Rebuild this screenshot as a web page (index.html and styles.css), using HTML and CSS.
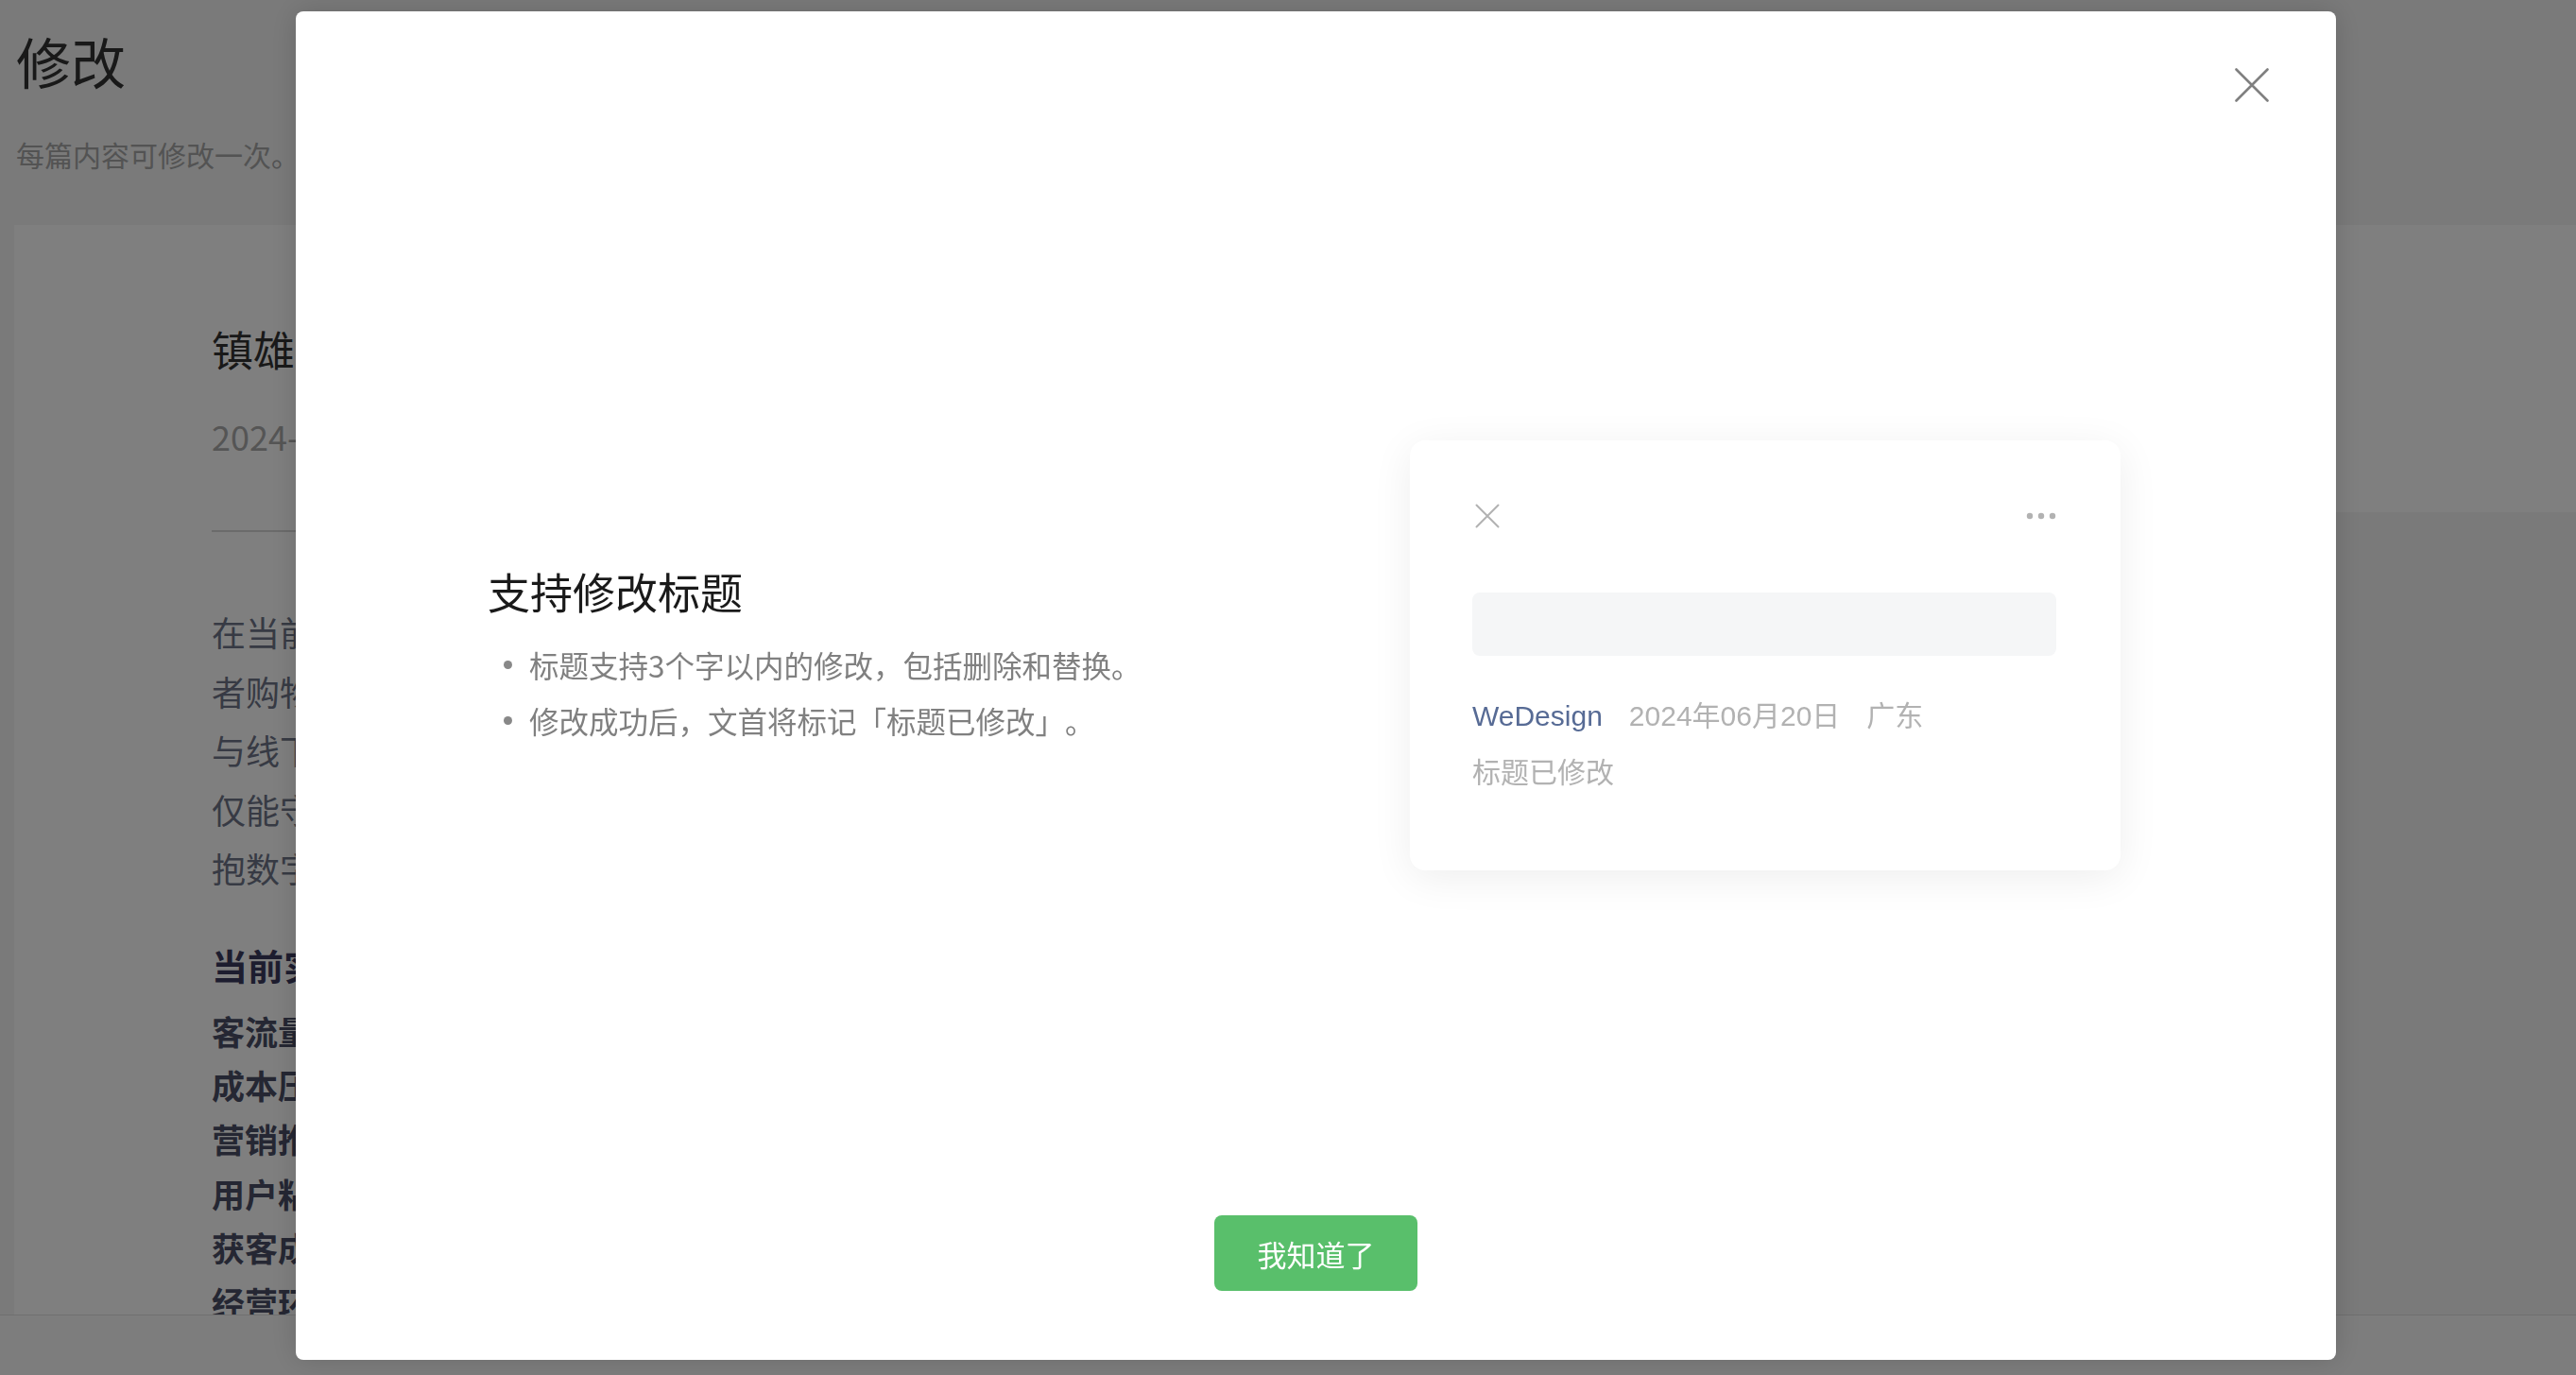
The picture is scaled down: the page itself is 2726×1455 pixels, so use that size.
FILE: index.html
```html
<!DOCTYPE html>
<html lang="zh-CN">
<head>
<meta charset="utf-8">
<title>修改</title>
<link rel="stylesheet" href="styles.css">
</head>
<body>
<div class="page">
  <header class="page-head">
    <h1 class="page-title">修改</h1>
    <p class="page-desc">每篇内容可修改一次。</p>
  </header>
  <main class="workspace">
    <article class="article-card">
      <h2 class="article-title">镇雄县商户数字化转型</h2>
      <div class="article-meta">2024-06-20 镇雄</div>
      <hr class="article-divider">
      <p class="article-text">在当前，消费<br>者购物方式多元，<br>与线下相融合，不<br>仅能守客，还需拥<br>抱数字化。</p>
      <h3 class="article-subtitle">当前实体商户面临的挑战</h3>
      <ul class="article-points">
        <li>客流量下降：线上分流明显</li>
        <li>成本压力大：租金持续上涨</li>
        <li>营销推广难：缺少有效渠道</li>
        <li>用户粘性低：复购率不高</li>
        <li>获客成本高：投放效果有限</li>
        <li>经营环境变化：竞争激烈</li>
      </ul>
    </article>
    <aside class="side-panel"></aside>
  </main>
  <footer class="bottom-bar"></footer>
</div>

<div class="overlay">
  <div class="dialog">
    <button class="dialog-close" type="button" aria-label="关闭">
      <svg width="36" height="36" viewBox="0 0 36 36"><path d="M1.5 1.5 L34.5 34.5 M34.5 1.5 L1.5 34.5" stroke="#808080" stroke-width="2.6" stroke-linecap="round" fill="none"/></svg>
    </button>
    <div class="dialog-body">
      <div class="intro">
        <h2 class="intro-title">支持修改标题</h2>
        <ul class="intro-list">
          <li>标题支持3个字以内的修改，包括删除和替换。</li>
          <li>修改成功后，文首将标记「标题已修改」。</li>
        </ul>
      </div>
      <div class="preview">
        <div class="preview-bar">
          <svg class="preview-x" width="26" height="26" viewBox="0 0 26 26"><path d="M1.5 1.5 L24.5 24.5 M24.5 1.5 L1.5 24.5" stroke="#b2b2b2" stroke-width="2" stroke-linecap="round" fill="none"/></svg>
          <svg width="32" height="8" viewBox="0 0 32 8"><circle cx="4" cy="4" r="3.2" fill="#b2b2b2"/><circle cx="16" cy="4" r="3.2" fill="#b2b2b2"/><circle cx="28" cy="4" r="3.2" fill="#b2b2b2"/></svg>
        </div>
        <div class="preview-title"></div>
        <div class="preview-meta"><span class="preview-author">WeDesign</span><span>2024年06月20日</span><span>广东</span></div>
        <div class="preview-tag">标题已修改</div>
      </div>
    </div>
    <div class="dialog-foot">
      <button class="btn-primary" type="button">我知道了</button>
    </div>
  </div>
</div>
</body>
</html>
```

FILE: styles.css
```css
* { box-sizing: border-box; }
html, body { margin: 0; height: 100%; }
body {
  font-family: "Noto Sans CJK SC", "Noto Sans", sans-serif;
  background: #f4f5f5;
  overflow: hidden;
  text-spacing-trim: space-all;
}

/* background page */
.page { height: 100vh; display: flex; flex-direction: column; }
.page-head { padding: 24px 16px 0 17px; }
.page-title { margin: 0; font-size: 58px; line-height: 80px; font-weight: 400; color: #333; }
.page-desc { margin: 37px 0 0; font-size: 30px; line-height: 44px; color: #a6a6a6; }

.workspace {
  flex: 1;
  min-height: 0;
  display: flex;
  gap: 16px;
  margin-top: 53px;
  padding-left: 15px;
  overflow: hidden;
}
.article-card {
  flex: 1;
  background: #fff;
  padding: 99px 209px 0;
  overflow: hidden;
}
.article-title { margin: 0; font-size: 44px; line-height: 64px; font-weight: 400; color: #333; white-space: nowrap; }
.article-meta { margin-top: 35px; font-size: 36px; line-height: 50px; color: #aaa; }
.article-divider { margin: 75px 0 0; border: 0; height: 2px; background: #d6d6d6; }
.article-text { margin: 74px 0 0; max-width: 290px; font-size: 36px; line-height: 62.5px; color: #6e7588; }
.article-subtitle { margin: 43px 0 0; font-size: 38px; line-height: 56px; font-weight: 700; color: #3b3a5e; }
.article-points {
  width: max-content;
  list-style: none;
  margin: 13px 0 0;
  padding: 0;
  font-size: 35px;
  line-height: 57.4px;
  font-weight: 700;
  color: #4a4e66;
}
.side-panel { flex: none; width: 600px; height: 304px; background: #fff; }
.bottom-bar { flex: none; height: 64px; background: #fafafa; border-top: 1px solid #e0e0e0; }

/* modal */
.overlay {
  position: fixed;
  inset: 0;
  background: rgba(0, 0, 0, 0.5);
  display: flex;
  padding: 12px 254px 16px 313px;
}
.dialog {
  flex: 1;
  position: relative;
  display: flex;
  flex-direction: column;
  background: #fff;
  border-radius: 8px;
  box-shadow: 0 0 30px rgba(0, 0, 0, 0.15);
}
.dialog-close {
  position: absolute;
  top: 60px;
  right: 71px;
  width: 36px;
  height: 36px;
  padding: 0;
  border: 0;
  background: none;
  cursor: pointer;
}
.dialog-close svg { display: block; }

.dialog-body {
  display: flex;
  align-items: center;
  justify-content: space-between;
  margin-top: 454px;
  padding: 0 228px 0 203px;
}
.intro-title { margin: 0 0 18px; font-size: 45px; line-height: 60px; font-weight: 400; color: #1a1a1a; }
.intro-list { list-style: none; margin: 0; padding: 0; font-size: 31.5px; line-height: 59px; color: #808080; }
.intro-list li { display: flex; align-items: center; }
.intro-list li::before {
  content: "";
  flex: none;
  width: 9px;
  height: 9px;
  margin: 0 18px 0 17px;
  border-radius: 50%;
  background: #888;
}

.preview {
  flex: none;
  width: 752px;
  height: 455px;
  padding: 68px 68px 0 66px;
  background: #fff;
  border-radius: 16px;
  box-shadow: 0 8px 44px rgba(0, 0, 0, 0.07);
}
.preview-bar { display: flex; justify-content: space-between; align-items: center; height: 24px; }
.preview-x { margin-left: 3px; display: block; }
.preview-bar svg { display: block; }
.preview-title { margin-top: 69px; height: 67px; border-radius: 8px; background: #f5f6f7; }
.preview-meta {
  margin-top: 42px;
  display: flex;
  gap: 28px;
  font-family: "Liberation Sans", "Noto Sans CJK SC", sans-serif;
  font-size: 30px;
  line-height: 44px;
  color: #b2b2b2;
}
.preview-author { color: #576b95; }
.preview-tag { margin-top: 13px; font-size: 30px; line-height: 44px; color: #b2b2b2; }

.dialog-foot { margin-top: auto; padding-bottom: 73px; display: flex; justify-content: center; }
.btn-primary {
  width: 215px;
  height: 80px;
  border: 0;
  border-radius: 8px;
  background: #59bf6b;
  color: #fff;
  font-family: inherit;
  font-size: 31px;
  font-weight: 400;
  cursor: pointer;
}
```
